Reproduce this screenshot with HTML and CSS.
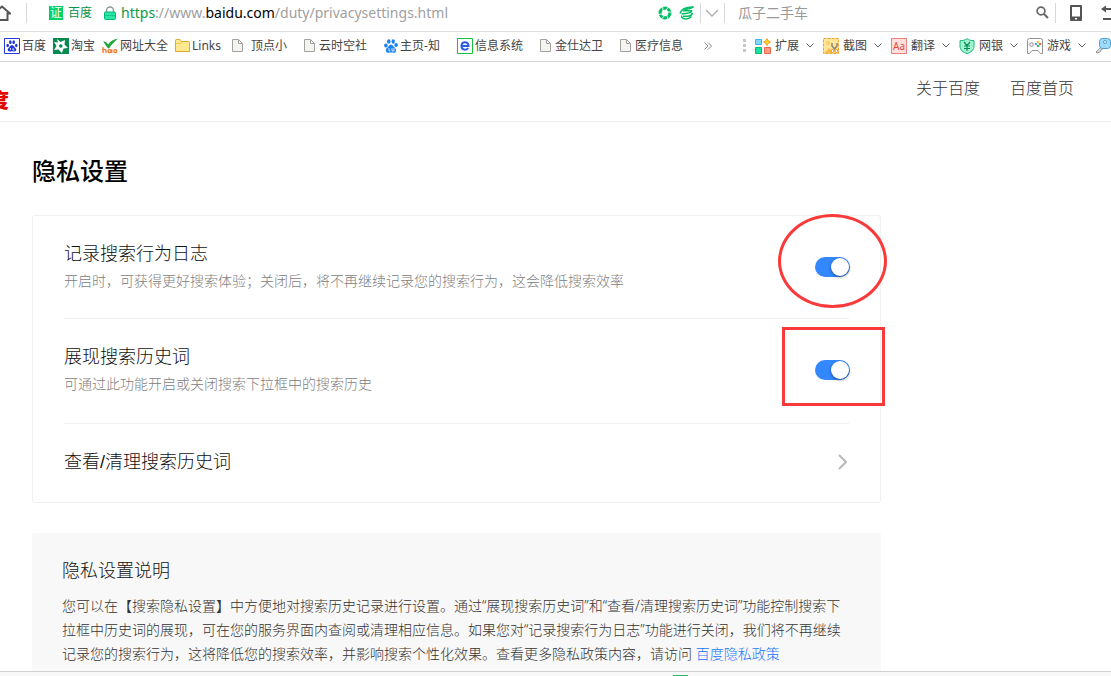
FILE: index.html
```html
<!DOCTYPE html>
<html lang="zh-CN">
<head>
<meta charset="utf-8">
<title>隐私设置</title>
<link rel="stylesheet" href="styles.css">
</head>
<body>
<div class="address-bar">
  <button class="icon-button home" aria-label="主页"><svg width="11" height="18" viewBox="0 0 11 18"><path d="M-6 9.500 2 2.500 10 9.500H7.500V16H-3" fill="none" stroke="#555" stroke-width="2"/></svg></button>
  <span class="bar-line"></span>
  <span class="cert"><span class="cert-badge">证</span>百度</span>
  <svg class="lock" width="12" height="14" viewBox="0 0 12 14"><path d="M2.500 7V4.500a3.500 3.500 0 0 1 7 0V7" fill="none" stroke="#8a9a9a" stroke-width="1.500"/><rect x="0.500" y="6" width="11" height="7.500" rx="1" fill="#2be5a5" stroke="#00b877"/><path d="M1 9.500h10" stroke="#10c98a"/></svg>
  <div class="url"><span class="scheme">https</span>://www.<span class="host">baidu.com</span>/duty/privacysettings.html</div>
  <button class="icon-button" aria-label="加速"><svg width="14" height="14" viewBox="0 0 14 14"><circle cx="7" cy="7" r="4.900" fill="none" stroke="#00bf63" stroke-width="3.200"/><path d="M4.500 0 5 4.500M10.500 1 7.500 4.500M14 6 9.500 6M10 14 9 9.500M3.500 13 6.500 9.500M0 8.500 4.500 8" stroke="#fff" stroke-width=".9"/></svg></button>
  <button class="icon-button mode" aria-label="浏览模式"><svg width="15" height="14" viewBox="0 0 15 14"><path d="M1 7.500C2 3 8 1 14 1 12 3.500 7 2 5 4.800h7.500C12 7.500 8 7 2.500 8M2.500 9.500C3 14 9 14 12.500 10.500M4 10.300h5c3-.5 4-1.500 4.500-3.500" fill="none" stroke="#00bf63" stroke-width="1.600"/></svg></button>
  <span class="bar-line"></span>
  <button class="icon-button drop" aria-label="展开"><svg width="14" height="8" viewBox="0 0 14 8"><path d="M1 1l6 6 6-6" fill="none" stroke="#b0b0b0" stroke-width="1.300"/></svg></button>
  <span class="bar-line"></span>
  <input class="search" type="text" value="瓜子二手车" aria-label="搜索">
  <button class="icon-button find" aria-label="查找"><svg width="13" height="13" viewBox="0 0 13 13"><circle cx="5" cy="5" r="3.900" fill="none" stroke="#666" stroke-width="1.700"/><path d="M8 8l4 4" stroke="#666" stroke-width="2"/></svg></button>
  <span class="bar-line"></span>
  <button class="icon-button phone" aria-label="手机"><svg width="12" height="16" viewBox="0 0 12 16"><path d="M1 0h10a1 1 0 0 1 1 1v14a1 1 0 0 1-1 1H1a1 1 0 0 1-1-1V1a1 1 0 0 1 1-1z" fill="#555"/><path d="M2 2h8v9.500H2zM5 13h2v1.500H5z" fill="#fff"/></svg></button>
  <button class="icon-button back" aria-label="恢复"><svg width="10" height="16" viewBox="0 0 10 16"><path d="M5 .5v7L0 4z" fill="#555"/><path d="M4 4h8M2 14h10" stroke="#555" stroke-width="2"/></svg></button>
</div>

<nav class="bookmarks" aria-label="收藏栏">
  <div class="sites">
    <a href="#"><svg width="16" height="16" viewBox="0 0 16 16"><path d="M.5.5h15v15H.5z" fill="#fff" stroke="#2337dc"/><g fill="#2337dc"><ellipse cx="3.700" cy="7.500" rx="1.300" ry="1.800"/><ellipse cx="6.300" cy="4.200" rx="1.300" ry="1.900"/><ellipse cx="9.700" cy="4.200" rx="1.300" ry="1.900"/><ellipse cx="12.300" cy="7.500" rx="1.300" ry="1.800"/><path d="M8 7c2 0 2.500 2.500 4 3.800 1 1.700-.5 3-2 2.700-1.500-.4-2.500-.4-4 0-1.500.3-3-1-2-2.700C5.500 9.500 6 7 8 7z"/></g><path d="M6.500 10v2M9 10v2h1.500" stroke="#fff" stroke-width=".8" fill="none"/></svg>百度</a>
    <a href="#"><svg width="16" height="16" viewBox="0 0 16 16"><path d="M0 0h16v16H0z" fill="#048a4f"/><path d="M4 1l3.500 3L12 2l-.5 4.500L15 10l-4.500.5L9 15l-3.500-3.500L1 12l2.500-4L1 4l4 .5z" fill="#fff"/><circle cx="7.800" cy="8" r="1.800" fill="#048a4f"/></svg>淘宝</a>
    <a href="#"><svg width="16" height="16" viewBox="0 0 16 16"><path d="M1 3.500c3 0 4 1 5 3C8 3 12 1 16 .5 13 3 9 7 7 10.500 5 10.500 3.500 6 1 3.500z" fill="#22a83b"/><path d="M1 9v6M1 12.500c1-1.500 3-1.500 3 .5v2M9.800 11.500V15" fill="none" stroke="#f2752b" stroke-width="1.300"/><circle cx="7.500" cy="13.200" r="1.500" fill="none" stroke="#f2752b" stroke-width="1.300"/><circle cx="13.300" cy="13.200" r="1.500" fill="none" stroke="#f2752b" stroke-width="1.300"/></svg>网址大全</a>
    <a href="#"><svg width="15" height="13" viewBox="0 0 15 13"><path d="M.5 12.500V1.500a1 1 0 0 1 1-1h3.500l1.500 2h7a1 1 0 0 1 1 1v9z" fill="#ffe98f" stroke="#dfa82c"/><path d="M1 4.500h5l1-1.500" fill="none" stroke="#f4c752"/></svg>Links</a>
  </div>
  <div class="sites pages">
    <a href="#" class="wide"><svg width="11" height="13" viewBox="0 0 11 13"><path d="M.5.5h6l4 4v8H.5zM6.500.5v4h4" fill="#f4f4f2" stroke="#a3a19c"/></svg>顶点小</a>
    <a href="#"><svg width="11" height="13" viewBox="0 0 11 13"><path d="M.5.5h6l4 4v8H.5zM6.500.5v4h4" fill="#f4f4f2" stroke="#a3a19c"/></svg>云时空社</a>
    <a href="#" class="tight"><svg width="14" height="14" viewBox="0 0 14 14"><g fill="#1b82f0"><ellipse cx="1.900" cy="6.500" rx="1.800" ry="2.100"/><ellipse cx="4.800" cy="2.500" rx="1.700" ry="2.300"/><ellipse cx="9.200" cy="2.500" rx="1.700" ry="2.300"/><ellipse cx="12.100" cy="6" rx="1.800" ry="2.100"/><path d="M7 5.500c2 0 2.500 2.500 4.500 4 1.500 2.500 0 4.500-2 4.200-2-.4-3-.4-5 0-2 .3-3.500-1.700-2-4.200C4.500 8 5 5.500 7 5.500z"/></g><path d="M5 9v3h1.200M8 9v3h2V9" stroke="#fff" stroke-width=".8" fill="none"/></svg>主页-知</a>
    <a href="#" class="tight"><svg width="16" height="16" viewBox="0 0 16 16"><path d="M.5.5h15v15H.5z" fill="#fff" stroke="#14c23c"/><path d="M4.500 8h7c0-5-7-5-7 0 0 4.500 5 4.500 6.700 2" fill="none" stroke="#2a5ae8" stroke-width="2"/></svg>信息系统</a>
    <a href="#"><svg width="11" height="13" viewBox="0 0 11 13"><path d="M.5.5h6l4 4v8H.5zM6.500.5v4h4" fill="#f4f4f2" stroke="#a3a19c"/></svg>金仕达卫</a>
    <a href="#"><svg width="11" height="13" viewBox="0 0 11 13"><path d="M.5.5h6l4 4v8H.5zM6.500.5v4h4" fill="#f4f4f2" stroke="#a3a19c"/></svg>医疗信息</a>
  </div>
  <button class="icon-button more" aria-label="更多"><svg width="8" height="8" viewBox="0 0 8 8"><path d="M.5.5 4 4 .5 7.500M4 .5 7.500 4 4 7.500" fill="none" stroke="#888"/></svg></button>
  <svg class="grip" width="3" height="13" viewBox="0 0 3 13"><path d="M0 0h3v3H0zM0 5h3v3H0zM0 10h3v3H0z" fill="#c8c8c8"/></svg>
  <div class="tools">
    <button><svg width="16" height="16" viewBox="0 0 16 16"><path d="M.5 1.500h6v5h-6z" fill="#7fd8fa" stroke="#35b6ee"/><path d="M.5 9.500h6v6h-6z" fill="#15e49a" stroke="#00b96e"/><path d="M9.500 9.500h6v6h-6z" fill="#ff9980" stroke="#f2684e"/><path d="M12 .5l1.300 2.200L15.500 4l-2.200 1.300L12 7.500l-1.300-2.200L8.500 4l2.200-1.300z" fill="#ffd631" stroke="#f5a31b"/></svg>扩展<svg class="chev" width="8" height="5" viewBox="0 0 8 5"><path d="M.5.5 4 4 7.500.5" fill="none" stroke="#666"/></svg></button>
    <button><svg width="16" height="16" viewBox="0 0 16 16"><path d="M.5.5h15v15H.5z" fill="#ffe69a" stroke="#eba62c" stroke-dasharray="3 1"/><circle cx="5" cy="5" r="2" fill="#ffd05c"/><path d="M1 15l5-5 3 3v2z" fill="#f5bd49"/><path d="M9 5v3l3 3.500M14 5v3l-3 3.500" fill="none" stroke="#858077" stroke-width="1.400"/><circle cx="9.500" cy="13" r="1.500" fill="#fff" stroke="#ee8d17"/><circle cx="13.500" cy="13" r="1.500" fill="#fff" stroke="#ee8d17"/></svg>截图<svg class="chev" width="8" height="5" viewBox="0 0 8 5"><path d="M.5.5 4 4 7.500.5" fill="none" stroke="#666"/></svg></button>
    <button><span class="aa">Aa</span>翻译<svg class="chev" width="8" height="5" viewBox="0 0 8 5"><path d="M.5.5 4 4 7.500.5" fill="none" stroke="#666"/></svg></button>
    <button><svg width="16" height="16" viewBox="0 0 16 16"><path d="M8 .7c2 1.500 4 2 7 2V8c0 4-3 6.500-7 7.500C4 14.500 1 12 1 8V2.700c3 0 5-.5 7-2z" fill="#a4f4d0" stroke="#14b877"/><path d="M5 4l3 3.500L11 4M8 7.500V13M5 8h6M5 10.500h6" fill="none" stroke="#078e5a" stroke-width="1.200"/></svg>网银<svg class="chev" width="8" height="5" viewBox="0 0 8 5"><path d="M.5.5 4 4 7.500.5" fill="none" stroke="#666"/></svg></button>
    <button><svg width="16" height="16" viewBox="0 0 16 16"><path d="M2.500.5h11a2 2 0 0 1 2 2v13h-2L11 12.500H5L2.500 15.500h-2v-13a2 2 0 0 1 2-2z" fill="#fff" stroke="#929292"/><circle cx="4.500" cy="6.500" r="1.800" fill="#fff" stroke="#888"/><path d="M10 3h2v2h-2z" fill="#f4bb20"/><path d="M12 5h2v2h-2z" fill="#f0583e"/><path d="M10 7h2v2h-2z" fill="#24bc6a"/><path d="M8 5h2v2H8z" fill="#35aef0"/></svg>游戏<svg class="chev" width="8" height="5" viewBox="0 0 8 5"><path d="M.5.5 4 4 7.500.5" fill="none" stroke="#666"/></svg></button>
    <button aria-label="钥匙"><svg width="16" height="16" viewBox="0 0 16 16"><path d="M1 14l6-6 2 2-3 2-1 2-3 1z" fill="#ddd" stroke="#999"/><rect x="4.500" y=".5" width="11" height="10" rx="3" fill="#9edbfa" stroke="#4b9fd0"/><circle cx="10" cy="4" r="1.500" fill="#fff" stroke="#4b9fd0"/></svg></button>
  </div>
</nav>

<div class="viewport">
  <header class="site-header">
    <a class="logo" href="#"><span>度</span></a>
    <nav class="site-nav"><a href="#">关于百度</a><a href="#">百度首页</a></nav>
  </header>
  <main class="content">
    <h1>隐私设置</h1>
    <section class="card">
      <div class="row">
        <div><label class="row-title" for="log">记录搜索行为日志</label><p>开启时，可获得更好搜索体验；关闭后，将不再继续记录您的搜索行为，这会降低搜索效率</p></div>
        <input class="toggle" type="checkbox" id="log" checked>
        <span class="mark oval"></span>
      </div>
      <div class="row">
        <div><label class="row-title" for="history">展现搜索历史词</label><p>可通过此功能开启或关闭搜索下拉框中的搜索历史</p></div>
        <input class="toggle" type="checkbox" id="history" checked>
        <span class="mark box"></span>
      </div>
      <a class="row" href="#"><span class="row-title">查看/清理搜索历史词</span><svg class="arrow" width="9" height="16" viewBox="0 0 9 16"><path d="M1 1l7 7-7 7" fill="none" stroke="#b8b8b8" stroke-width="2"/></svg></a>
    </section>
    <section class="notice">
      <h2>隐私设置说明</h2>
      <p>您可以在【搜索隐私设置】中方便地对搜索历史记录进行设置。通过“展现搜索历史词”和“查看/清理搜索历史词”功能控制搜索下拉框中历史词的展现，可在您的服务界面内查阅或清理相应信息。如果您对“记录搜索行为日志”功能进行关闭，我们将不再继续记录您的搜索行为，这将降低您的搜索效率，并影响搜索个性化效果。查看更多隐私政策内容，请访问 <a href="#">百度隐私政策</a></p>
    </section>
  </main>
</div>
<footer class="status"><span class="status-item"></span></footer>
</body>
</html>
```
FILE: styles.css
```css
* { box-sizing: border-box; }

body {
  margin: 0;
  height: 100vh;
  display: flex;
  flex-direction: column;
  overflow: hidden;
  background: #fff;
  color: #333;
  font: 14px/24px "Liberation Sans", "Noto Sans CJK SC", sans-serif;
}

a { color: inherit; text-decoration: none; }
h1, h2, p { margin: 0; font-weight: 400; }
svg { flex: none; display: block; }
button {
  border: 0;
  padding: 0;
  background: none;
  color: inherit;
  font: inherit;
}

/* Address bar */
.address-bar {
  flex: none;
  display: flex;
  align-items: center;
  height: 32px;
  padding-bottom: 6px;
  border-bottom: 1px solid #dfdedc;
  font: 12px/20px "Noto Sans", "Noto Sans CJK SC", sans-serif;
  overflow: hidden;
}
.icon-button { flex: none; display: flex; align-items: center; }
.bar-line { flex: none; width: 1px; height: 20px; background: #d8d8d8; }
.home { width: 26px; }
.cert {
  display: flex;
  flex: none;
  align-items: center;
  gap: 5px;
  margin-left: 22px;
  color: #079150;
}
.cert-badge {
  width: 14px;
  height: 14px;
  background: #00d26a;
  color: #fff;
  font-size: 12px;
  line-height: 14px;
  text-align: center;
}
.lock { margin: 0 5px 0 12px; }
.url {
  flex: 0 1 537px;
  color: #a0a0a0;
  font: 14px/20px "Noto Sans", sans-serif;
  white-space: nowrap;
}
.scheme { color: #0b9a43; }
.host { color: #000; }
.mode { margin: 0 6px 0 7px; }
.drop { margin: 0 5px 0 4px; }
.search {
  flex: 1;
  min-width: 80px;
  margin-left: 13px;
  padding: 0 0 2px;
  border: 0;
  outline: 0;
  background: none;
  color: #999;
  font: 14px/20px "Noto Sans CJK SC", sans-serif;
}
.find { margin-right: 6px; }
.phone { margin: 0 19px 0 14px; }

/* Bookmarks */
.bookmarks {
  flex: none;
  display: flex;
  align-items: center;
  height: 30px;
  padding: 0 0 2px 4px;
  border-bottom: 1px solid #d6d6d4;
  color: #444;
  font: 12px/20px "Noto Sans", "Noto Sans CJK SC", sans-serif;
  white-space: nowrap;
  overflow: hidden;
}
.sites { flex: none; display: flex; gap: 7px; }
.sites a { display: flex; align-items: center; gap: 2px; }
.sites.pages { gap: 17px; margin-left: 11px; }
.pages a { gap: 4px; }
.pages .wide { gap: 8px; }
.pages .tight { gap: 2px; }
.more { margin-left: 21px; }
.grip { margin: 0 9px 0 31px; }
.tools { flex: none; display: flex; gap: 9px; }
.tools button { display: flex; align-items: center; gap: 4px; }
.chev { margin-left: 3px; }
.aa {
  width: 16px;
  height: 16px;
  border: 1px solid #ef8278;
  background: #ffe0dc;
  color: #dd4b42;
  font-size: 10px;
  line-height: 14px;
  text-align: center;
}

/* Page */
.viewport { flex: 1; min-height: 0; overflow: hidden; }
.site-header {
  display: flex;
  align-items: center;
  justify-content: space-between;
  height: 60px;
  padding-right: 37px;
  border-bottom: 1px solid #f2f2f2;
  box-shadow: 0 1px 1px #fafafa;
}
.logo {
  display: flex;
  justify-content: flex-end;
  width: 9px;
  margin-top: 18px;
  overflow: hidden;
  color: #e10602;
  font-size: 20px;
  font-weight: 900;
  white-space: nowrap;
}
.site-nav {
  display: flex;
  gap: 30px;
  padding-bottom: 6px;
  font-size: 16px;
  font-weight: 300;
}
.content { max-width: 913px; padding: 33px 32px; }
h1 {
  margin-bottom: 26px;
  color: #000;
  font-size: 24px;
  font-weight: 500;
  line-height: 34px;
}
.card {
  border: 1px solid #f0f0f0;
  border-radius: 3px;
}
.row {
  position: relative;
  display: flex;
  align-items: center;
  justify-content: space-between;
  margin: 0 31px;
  padding: 24px 0 26px;
  border-bottom: 1px solid #f0f0f0;
}
.row:first-child { padding-bottom: 24px; }
.row:last-child { border-bottom: 0; }
.row-title {
  display: block;
  color: #111;
  font-size: 18px;
  font-weight: 300;
  line-height: 28px;
}
.row p {
  color: #808080;
  font-weight: 300;
  line-height: 26px;
}
.toggle {
  appearance: none;
  flex: none;
  width: 35px;
  height: 20px;
  margin: 0 -1px 0 16px;
  border-radius: 10px;
  background: #38f;
}
.toggle::before {
  content: "";
  display: block;
  width: 18px;
  height: 18px;
  margin: 1px;
  border-radius: 50%;
  background: #fff;
  box-shadow: 0 1px 3px rgba(0, 0, 0, 0.5);
}
.toggle:checked::before { margin-left: 16px; }
.arrow { margin-right: 2px; }
.mark {
  position: absolute;
  border: 3px solid #fa3a3a;
  pointer-events: none;
}
.oval {
  top: -2px;
  right: -38px;
  width: 109px;
  height: 94px;
  border-radius: 50%;
}
.box {
  top: 8px;
  right: -36px;
  width: 103px;
  height: 79px;
}

.notice {
  margin-top: 30px;
  padding: 24px 30px 32px;
  border-radius: 3px;
  background: #f8f8f8;
}
h2 {
  margin-bottom: 9px;
  color: #111;
  font-size: 18px;
  font-weight: 300;
  line-height: 28px;
}
.notice p {
  color: #333;
  font-family: "Noto Sans", "Noto Sans CJK SC", sans-serif;
  font-weight: 300;
}
.notice a { color: #1a75ff; }

.status {
  flex: none;
  display: flex;
  align-items: flex-end;
  height: 5px;
  padding-left: 673px;
  border-top: 1px solid #d0d2d0;
  background: #f8f8f8;
}
.status-item { width: 15px; height: 1px; background: #24b35e; }
```
